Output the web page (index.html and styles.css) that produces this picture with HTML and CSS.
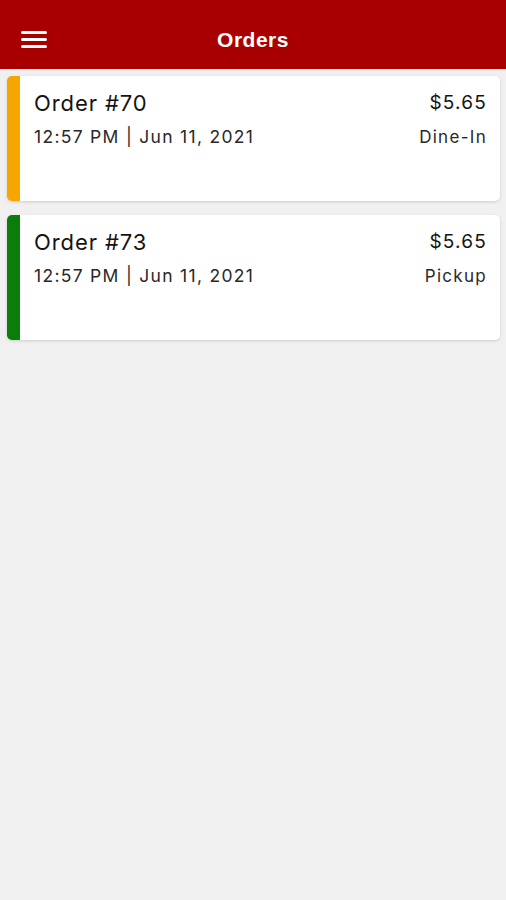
FILE: index.html
```html
<!DOCTYPE html>
<html>
    <head>
        <meta charset="UTF-8">
        <meta name="viewport" content="width=device-width, initial-scale=1.0">
        <title>Orders</title>
        <link rel="stylesheet" href="styles.css">
    </head>

    <body>
        <div class="header">
            <button class="menu-button">
                <svg width="26" height="20" viewBox="0 0 26 20">
                    <rect x="0" y="2" width="26" height="3" rx="1.5" fill="white"/>
                    <rect x="0" y="9" width="26" height="3" rx="1.5" fill="white"/>
                    <rect x="0" y="16" width="26" height="3" rx="1.5" fill="white"/>
                </svg>
            </button>
            <h1 class="header-title">Orders</h1>
        </div>

        <div class="order-list">
            <div class="order-card dine-in">
                <div class="order-info">
                    <p class="order-number">Order #70</p>
                    <p class="order-time">12:57 PM | Jun 11, 2021</p>
                </div>
                <div class="order-side">
                    <p class="order-price">$5.65</p>
                    <p class="order-type">Dine-In</p>
                </div>
            </div>

            <div class="order-card pickup">
                <div class="order-info">
                    <p class="order-number">Order #73</p>
                    <p class="order-time">12:57 PM | Jun 11, 2021</p>
                </div>
                <div class="order-side">
                    <p class="order-price">$5.65</p>
                    <p class="order-type">Pickup</p>
                </div>
            </div>
        </div>
    </body>
</html>
```

FILE: styles.css
```css
body {
    margin: 0;
    font-family: Inter, "Liberation Sans", sans-serif;
    background-color: rgb(240, 240, 240);
    min-height: 100vh;
}

p {
    margin: 0;
}

.header {
    position: relative;
    display: flex;
    align-items: center;
    justify-content: center;
    height: 69px;
    background-color: rgb(168, 0, 0);
}

.menu-button {
    position: absolute;
    left: 21px;
    top: 29px;
    padding: 0;
    background: none;
    border: none;
    cursor: pointer;
    line-height: 0;
}

.header-title {
    margin: 0;
    color: white;
    font-size: 21px;
    font-weight: bold;
    font-family: "Liberation Sans", sans-serif;
    letter-spacing: 0.5px;
    padding-top: 11px;
}

.order-list {
    display: flex;
    flex-direction: column;
    row-gap: 14px;
    padding: 7px 6px 7px 7px;
}

.order-card {
    display: flex;
    justify-content: space-between;
    height: 125px;
    box-sizing: border-box;
    background-color: white;
    border-left: 13px solid;
    border-radius: 5px;
    box-shadow: 0 1px 3px rgba(0, 0, 0, 0.15);
    padding: 14px 13px 0 14px;
}

.dine-in {
    border-left-color: rgb(247, 165, 0);
}

.pickup {
    border-left-color: rgb(10, 125, 10);
}

.order-number {
    font-size: 22px;
    letter-spacing: 0.9px;
    color: rgb(20, 20, 20);
    line-height: 26px;
}

.order-time {
    font-size: 17.5px;
    letter-spacing: 1.3px;
    color: rgb(40, 40, 40);
    margin-top: 10px;
    line-height: 22px;
}

.order-side {
    text-align: right;
}

.order-price {
    font-size: 19px;
    letter-spacing: 1.2px;
    color: rgb(20, 20, 20);
    line-height: 26px;
}

.order-type {
    font-size: 17px;
    letter-spacing: 1.3px;
    color: rgb(40, 40, 40);
    margin-top: 10px;
    line-height: 22px;
}
```
